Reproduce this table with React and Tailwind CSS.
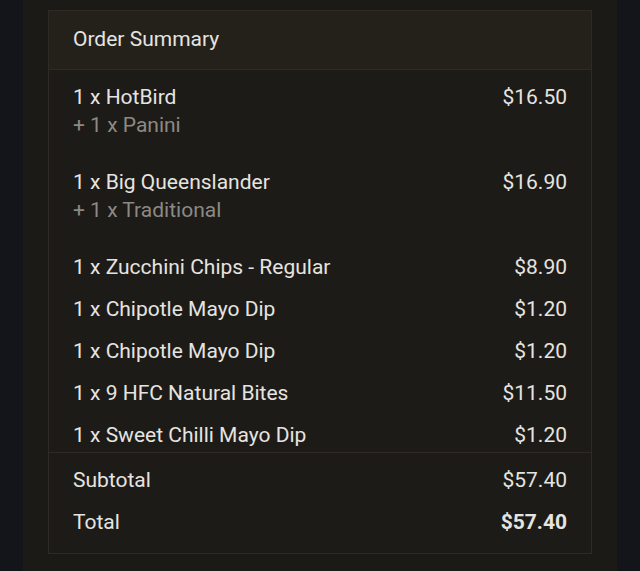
const ITEMS = [
  { name: '1 x HotBird', price: '$16.50', sub: '+ 1 x Panini' },
  { name: '1 x Big Queenslander', price: '$16.90', sub: '+ 1 x Traditional' },
  { name: '1 x Zucchini Chips - Regular', price: '$8.90' },
  { name: '1 x Chipotle Mayo Dip', price: '$1.20' },
  { name: '1 x Chipotle Mayo Dip', price: '$1.20' },
  { name: '1 x 9 HFC Natural Bites', price: '$11.50' },
  { name: '1 x Sweet Chilli Mayo Dip', price: '$1.20' },
];

export default function App() {
  return (
    <div className="h-[571px] w-[640px] overflow-hidden bg-[#13151a] font-['Roboto',sans-serif]">
      <div className="mx-[23px] h-full bg-[#1c1a16] px-[25px] pt-[10px]">
        <section className="border border-[#2e2b26] bg-[#1d1b17] text-[#e6e4e0]">
          {/* Header */}
          <div className="flex h-[59px] items-center border-b border-[#2e2b26] bg-[#24211b] px-6 text-[21px]">
            Order Summary
          </div>

          {/* Line items */}
          <div className="h-[382px] overflow-hidden px-6 pt-[6px]">
            {ITEMS.map((it, i) => (
              <div key={i} className={it.sub ? 'pt-[9px] pb-[24px]' : 'py-[9px]'}>
                <div className="flex justify-between text-[21px] leading-6">
                  <span>{it.name}</span>
                  <span>{it.price}</span>
                </div>
                {it.sub && (
                  <div className="mt-1 text-[21px] leading-6 text-[#8c8984]">{it.sub}</div>
                )}
              </div>
            ))}
          </div>

          {/* Totals */}
          <div className="border-t border-[#2e2b26] px-6 pt-[7px] pb-[9px] text-[21px]">
            <div className="flex h-[42px] items-center justify-between">
              <span>Subtotal</span>
              <span>$57.40</span>
            </div>
            <div className="flex h-[42px] items-center justify-between">
              <span>Total</span>
              <span className="font-bold">$57.40</span>
            </div>
          </div>
        </section>
      </div>
    </div>
  );
}
